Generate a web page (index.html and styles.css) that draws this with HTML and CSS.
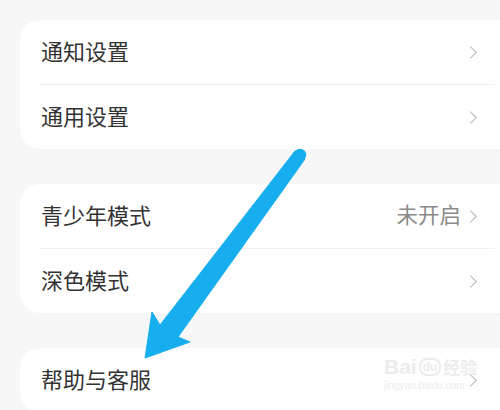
FILE: index.html
```html
<!DOCTYPE html>
<html lang="zh">
<head>
<meta charset="utf-8">
<link rel="stylesheet" href="styles.css">
</head>
<body>
<div class="page">
  <div class="card">
    <div class="row"><span class="label">通知设置</span><span class="right"><svg class="chev" viewBox="0 0 10 16"><path d="M1.5 1.5 L8 8 L1.5 14.5"/></svg></span></div>
    <div class="divider"></div>
    <div class="row"><span class="label">通用设置</span><span class="right"><svg class="chev" viewBox="0 0 10 16"><path d="M1.5 1.5 L8 8 L1.5 14.5"/></svg></span></div>
  </div>
  <div class="card">
    <div class="row"><span class="label">青少年模式</span><span class="right"><span class="value">未开启</span><svg class="chev" viewBox="0 0 10 16"><path d="M1.5 1.5 L8 8 L1.5 14.5"/></svg></span></div>
    <div class="divider"></div>
    <div class="row"><span class="label">深色模式</span><span class="right"><svg class="chev" viewBox="0 0 10 16"><path d="M1.5 1.5 L8 8 L1.5 14.5"/></svg></span></div>
  </div>
  <div class="card">
    <div class="row"><span class="label">帮助与客服</span><span class="right"><svg class="chev" viewBox="0 0 10 16"><path d="M1.5 1.5 L8 8 L1.5 14.5"/></svg></span></div>
  </div>

  <svg class="arrow" viewBox="0 0 500 410" width="500" height="410">
    <polygon points="295,151 305,159 178,337 190,342 145,358 152,312 160,325" fill="#17aef0" stroke="#17aef0" stroke-width="1" stroke-linejoin="round"/>
    <circle cx="300" cy="155" r="6.2" fill="#17aef0"/>
  </svg>

  <div class="watermark">
    <div class="wm-top"><span>Bai</span><span class="wm-du">du</span><span class="wm-cn">经验</span></div>
    <div class="wm-url">jingyan.baidu.com</div>
  </div>
</div>
</body>
</html>
```

FILE: styles.css
```css
html, body {
  margin: 0;
  padding: 0;
}
body {
  background: #f7f7f7;
  font-family: "Noto Sans CJK SC", "Noto Sans", sans-serif;
  width: 500px;
  height: 410px;
  overflow: hidden;
}
.page {
  position: relative;
  width: 500px;
  height: 410px;
  padding: 20px 0 0 20px;
  box-sizing: border-box;
  display: flex;
  flex-direction: column;
  gap: 35px;
}
.card {
  background: #ffffff;
  border-radius: 20px;
  margin-right: -20px;
  flex-shrink: 0;
}
.row {
  height: 64px;
  display: flex;
  align-items: center;
  justify-content: space-between;
  padding: 0 42px 0 21px;
}
.label {
  font-size: 22px;
  color: #333333;
  line-height: 1;
  margin-top: -4px;
}
.right {
  display: flex;
  align-items: center;
  gap: 8px;
}
.value {
  font-size: 21.5px;
  color: #8a8a8a;
  line-height: 1;
  margin-top: -4px;
}
.chev {
  width: 9px;
  height: 15px;
  fill: none;
  stroke: #c2c2c2;
  stroke-width: 1.4;
}
.divider {
  height: 1px;
  background: #f0f0f0;
  margin: 0 25px 0 20px;
}
.arrow {
  position: absolute;
  left: 0;
  top: 0;
}
.watermark {
  position: absolute;
  left: 384px;
  top: 356px;
  color: #ececec;
  font-family: "Liberation Sans", sans-serif;
}
.wm-top {
  display: flex;
  align-items: center;
  font-size: 21px;
  font-weight: bold;
  line-height: 1;
  gap: 2px;
}
.wm-du {
  font-size: 12px;
  border: 2px solid #ececec;
  border-radius: 8px;
  padding: 1px 2px;
}
.wm-cn {
  font-size: 17px;
  font-family: "Noto Sans CJK SC", sans-serif;
}
.wm-url {
  font-size: 10px;
  margin-top: 3px;
}
```
